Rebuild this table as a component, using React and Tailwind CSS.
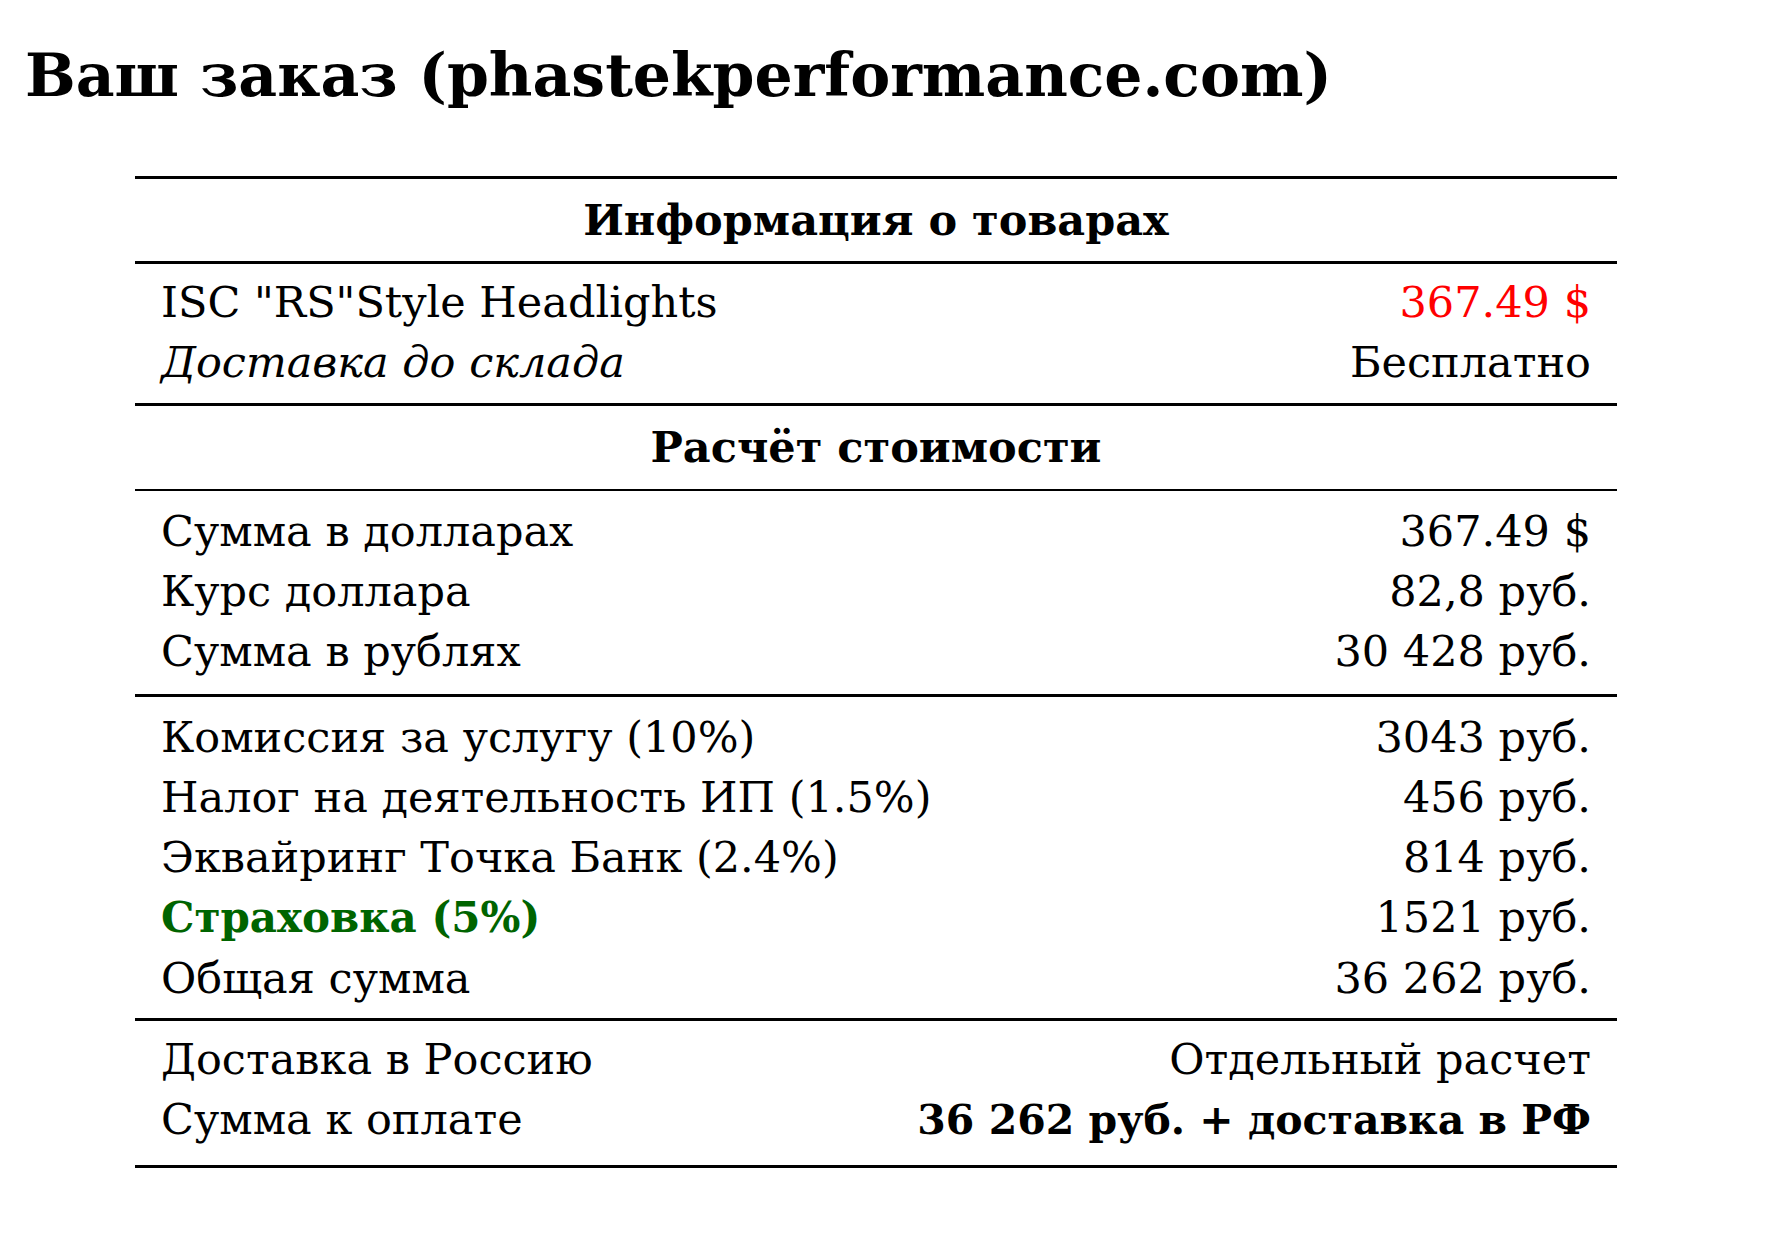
import React from 'react';

const rowsRate = [
  ['Сумма в долларах', '367.49 $'],
  ['Курс доллара', '82,8 руб.'],
  ['Сумма в рублях', '30 428 руб.'],
];

const rowsFees = [
  ['Комиссия за услугу (10%)', '3043 руб.'],
  ['Налог на деятельность ИП (1.5%)', '456 руб.'],
  ['Эквайринг Точка Банк (2.4%)', '814 руб.'],
];

const Row = ({ label, value, labelClass = '', valueClass = '' }) => (
  <div className="flex justify-between items-baseline leading-[60px] whitespace-nowrap">
    <span className={labelClass}>{label}</span>
    <span className={valueClass}>{value}</span>
  </div>
);

export default function App() {
  return (
    <div className="min-h-screen bg-white text-black font-['DejaVu_Serif',serif]">
      {/* Title */}
      <h1 className="pl-[25px] pt-[45px] text-[60px] font-bold leading-none whitespace-nowrap">
        Ваш заказ (phastekperformance.com)
      </h1>

      {/* Order table */}
      <div className="ml-[135px] mt-[71px] w-[1482px] border-t-[3px] border-black text-[43px]">
        <div className="h-[85px] flex items-center justify-center font-bold border-b-[3px] border-black">
          Информация о товарах
        </div>

        <div className="px-[26px] pt-[8px] pb-[11px] border-b-[3px] border-black">
          <Row label={'ISC "RS"Style Headlights'} value="367.49 $" valueClass="text-[#ff0000]" />
          <Row label="Доставка до склада" value="Бесплатно" labelClass="italic" />
        </div>

        <div className="h-[85px] flex items-center justify-center font-bold border-b-2 border-black">
          Расчёт стоимости
        </div>

        <div className="px-[26px] pt-[10px] pb-[13px] border-b-[3px] border-black">
          {rowsRate.map(([l, v]) => (
            <Row key={l} label={l} value={v} />
          ))}
        </div>

        <div className="px-[26px] pt-[10px] pb-[10px] border-b-[3px] border-black">
          {rowsFees.map(([l, v]) => (
            <Row key={l} label={l} value={v} />
          ))}
          <Row label="Страховка (5%)" value="1521 руб." labelClass="font-bold text-[42px] text-[#006400]" />
          <Row label="Общая сумма" value="36 262 руб." />
        </div>

        <div className="px-[26px] pt-[8px] pb-[15px] border-b-[3px] border-black">
          <Row label="Доставка в Россию" value="Отдельный расчет" />
          <Row label="Сумма к оплате" value="36 262 руб. + доставка в РФ" valueClass="font-bold text-[41px]" />
        </div>
      </div>
    </div>
  );
}
